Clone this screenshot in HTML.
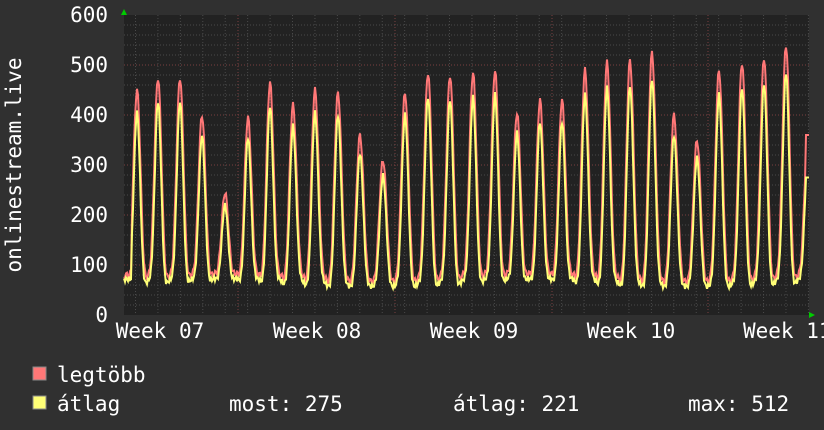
<!DOCTYPE html><html><head><meta charset="utf-8"><style>
body{margin:0;background:#303030;width:824px;height:430px;overflow:hidden;font-family:"DejaVu Sans Mono","Liberation Mono",monospace;color:#fff}
svg{position:absolute;left:0;top:0}
text{font-family:"DejaVu Sans Mono","Liberation Mono",monospace;fill:#fff;font-size:21px}
</style></head><body>
<svg id="s" width="824" height="430" xmlns="http://www.w3.org/2000/svg">
<rect x="124" y="15" width="685" height="300" fill="#222"/>
<g id="grid"></g>
<polyline id="r" fill="none" stroke="#ff7777" stroke-width="2"/>
<polyline id="y" fill="none" stroke="#ffff77" stroke-width="2"/>
<polygon points="121,15 127,15 124,9" fill="#0c0"/>
<polygon points="809,312 809,318 815,315" fill="#0c0"/>
<text x="108" y="22" text-anchor="end">600</text>
<text x="108" y="72" text-anchor="end">500</text>
<text x="108" y="122" text-anchor="end">400</text>
<text x="108" y="172" text-anchor="end">300</text>
<text x="108" y="222" text-anchor="end">200</text>
<text x="108" y="272" text-anchor="end">100</text>
<text x="108" y="322" text-anchor="end">0</text>
<text x="160" y="338" text-anchor="middle">Week 07</text>
<text x="317" y="338" text-anchor="middle">Week 08</text>
<text x="474" y="338" text-anchor="middle">Week 09</text>
<text x="631" y="338" text-anchor="middle">Week 10</text>
<text x="743" y="338">Week 11</text>
<text transform="translate(21,165) rotate(-90)" text-anchor="middle">onlinestream.live</text>
<rect x="33" y="367" width="13" height="13" fill="#ff7777" stroke="#888" stroke-width="1"/>
<rect x="33" y="396" width="13" height="13" fill="#ffff77" stroke="#888" stroke-width="1"/>
<text x="57" y="382">legtöbb</text>
<text x="57" y="411">átlag</text>
<text x="229" y="411">most: 275</text>
<text x="453" y="411">átlag: 221</text>
<text x="688" y="411">max: 512</text>
</svg>
<script>
var g=document.getElementById('grid'),h='';
for(var v=20;v<600;v+=20){var yy=315-v/2;h+='<line x1="124" x2="809" y1="'+yy+'" y2="'+yy+'" stroke="'+(v%100?'#4a4a4a':'#7a4040')+'" stroke-dasharray="1,2"/>';}
for(var x=135.5;x<809;x+=22.43){h+='<line x1="'+x+'" x2="'+x+'" y1="15" y2="315" stroke="#4a4a4a" stroke-dasharray="1,2"/>';}
[238,395,552,708].forEach(function(x){h+='<line x1="'+x+'" x2="'+x+'" y1="15" y2="315" stroke="#7a4040" stroke-dasharray="1,2"/>';});
g.innerHTML=h;
var pk=[[126,80],[137,450],[158,475],[180,475],[202,400],[225,245],[248,395],[270,465],[293,420],[315,450],[338,445],[360,360],[383,310],[405,445],[428,485],[450,480],[473,485],[495,490],[517,405],[540,430],[562,430],[585,490],[607,505],[630,510],[652,525],[674,400],[697,350],[719,490],[742,505],[764,515],[786,540],[808,360]];
var R=[],Y=[];
for(var x=124;x<=809;x+=1){
 var best=pk[0];for(var i=0;i<pk.length;i++){if(Math.abs(pk[i][0]-x)<Math.abs(best[0]-x))best=pk[i];}
 var d=(x-best[0])/11.2;var c=Math.cos(Math.PI*d*0.5);c=Math.max(0,c);
 var fr=Math.pow(c,4),fy=Math.pow(c,5);
 var base=75+8*Math.sin(x*0.3);
 var rv=base+(best[1]-base)*fr+6*Math.sin(x*1.7);
 var yv=base-10+(best[1]*0.9-base+10)*fy+5*Math.sin(x*2.3);
 if(x>=806){rv=360;yv=275}
 R.push(x+','+(315-rv/2).toFixed(1));Y.push(x+','+(315-yv/2).toFixed(1));
}
document.getElementById('r').setAttribute('points',R.join(' '));
document.getElementById('y').setAttribute('points',Y.join(' '));
</script>
</body></html>
